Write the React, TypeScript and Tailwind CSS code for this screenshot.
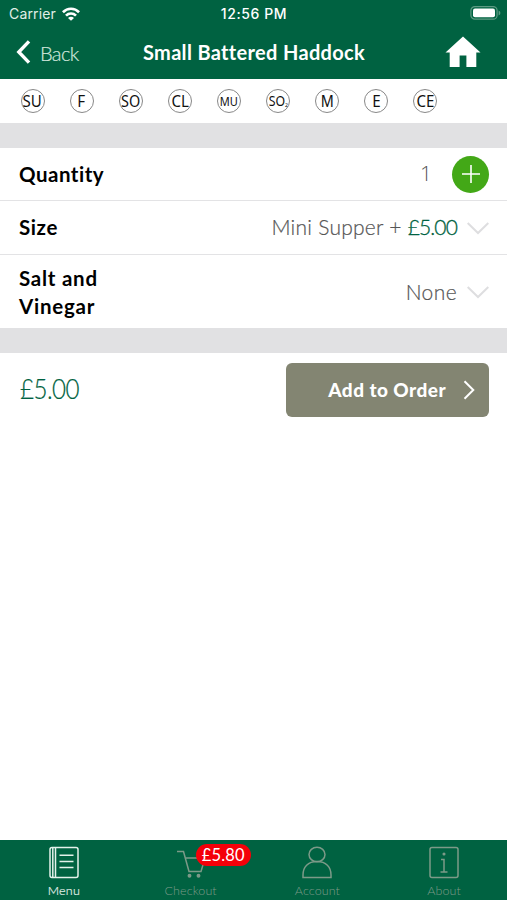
import React from 'react';

interface Allergen {
  code: string;
  sub?: string;
  className: string;
}

const allergens: Allergen[] = [
  { code: 'SU', className: 'text-[16px] scale-x-[0.94]' },
  { code: 'F', className: 'text-[16px] scale-x-[0.95]' },
  { code: 'SO', className: 'text-[16px] scale-x-[0.9]' },
  { code: 'CL', className: 'text-[16px] scale-x-[0.94]' },
  { code: 'MU', className: 'pt-[1px] text-[12px] scale-x-[0.92]' },
  { code: 'SO', sub: '2', className: 'text-[14.5px] scale-x-[0.85] pb-[1px]' },
  { code: 'M', className: 'text-[16px] scale-x-[0.9]' },
  { code: 'E', className: 'text-[16px] scale-x-[0.95]' },
  { code: 'CE', className: 'text-[16px] scale-x-[0.94]' },
];

const StatusBar: React.FC = () => (
  <div className="grid h-[27px] grid-cols-3 items-center pl-[9px] pr-[6px] font-['Inter',sans-serif] text-white">
    <div className="flex items-center gap-[6px]">
      <span className="text-[14px] tracking-[0.15px] text-[#e0efe7]">Carrier</span>
      <svg width="18" height="14" viewBox="0 0 18 14" fill="none" stroke="white" strokeWidth="2.7">
        <path d="M0.9 5.2C5.4 0.6 12.6 0.6 17.1 5.2" />
        <path d="M4 8.6C6.8 5.8 11.2 5.8 14 8.6" />
        <path d="M9 13.8L6 10.9C7.8 9.4 10.2 9.4 12 10.9Z" fill="white" stroke="none" />
      </svg>
    </div>
    <span className="-ml-[2px] whitespace-nowrap text-center text-[14px] font-medium tracking-[0.6px]">12:56 PM</span>
    <svg className="-mt-[1px] justify-self-end" width="31" height="14" viewBox="0 0 31 14">
      <rect x="0.9" y="0.6" width="26.2" height="12.6" rx="4" fill="none" stroke="#5d9b83" strokeWidth="1.2" />
      <rect x="3" y="2.6" width="22" height="8.6" rx="2" fill="white" />
      <path d="M28.6 4.6Q30.4 5.4 30.4 7T28.6 9.4Z" fill="#5d9b83" />
    </svg>
  </div>
);

const NavBar: React.FC = () => (
  <div className="grid h-[52px] grid-cols-[100px_1fr_90px] items-center pb-[2px] pl-[16px] pr-[26px] text-white">
    <div className="flex items-center gap-[9px]">
      <svg width="15" height="24" viewBox="0 0 15 24" fill="none" stroke="white" strokeWidth="3.4">
        <path d="M13 1.3L2.8 12L13 22.7" />
      </svg>
      <span className="pt-[1px] text-[20px] font-light tracking-[-0.6px] text-[#d0e6dc] [-webkit-text-stroke:0.2px_#d0e6dc]">Back</span>
    </div>
    <h1 className="whitespace-nowrap pl-[1px] text-center text-[20px] font-bold tracking-[0.33px]">Small Battered Haddock</h1>
    <svg className="-mt-[1px] justify-self-end" width="36" height="32" viewBox="0 0 36 32" fill="white">
      <path d="M18 0.5L35.5 16.5H31.3V31H21.4V19.5H14.6V31H4.7V16.5H0.5Z" />
    </svg>
  </div>
);

const ChevronDown: React.FC = () => (
  <svg className="mt-[2px]" width="22" height="13" viewBox="0 0 22 13" fill="none" stroke="#dedee0" strokeWidth="2">
    <path d="M0.7 1L11 11L21.3 1" />
  </svg>
);

interface TabProps {
  label: string;
  active?: boolean;
  badge?: string;
  labelClass: string;
  children: React.ReactNode;
}

const Tab: React.FC<TabProps> = ({ label, active, badge, labelClass, children }) => (
  <div className={`relative flex flex-1 flex-col items-center pl-[1px] pt-[6px] ${active ? 'text-[#e3f1ea]' : 'text-[#7c9a88]'}`}>
    <svg width="32" height="34" viewBox="0 0 32 34" fill="none" stroke="currentColor" strokeWidth="1.5">
      {children}
    </svg>
    <span className={`mt-[4px] text-[12.5px] font-light leading-[14px] ${labelClass}`}>{label}</span>
    {badge && (
      <span className="absolute left-[69px] top-[4px] flex h-[22px] w-[55px] items-center justify-center rounded-full bg-[#f40009] text-[16.5px] tracking-[0.2px] text-white">
        {badge}
      </span>
    )}
  </div>
);

const App: React.FC = () => (
  <div className="flex h-[900px] w-[507px] flex-col overflow-hidden bg-white font-['Lato',sans-serif]">
    <header className="h-[79px] shrink-0 bg-[#006241]">
      <StatusBar />
      <NavBar />
    </header>

    <div className="flex h-[44px] shrink-0 items-center gap-[25.1px] pl-[20.5px]">
      {allergens.map((item, index) => (
        <span
          key={index}
          className="flex size-[24px] items-center justify-center rounded-full border border-[#888] font-['Noto_Sans','Open_Sans',sans-serif] leading-none text-[#111]"
        >
          <span className={`inline-flex items-end ${item.className}`}>
            {item.code}
            {item.sub && <span className="text-[6px] leading-[5px]">{item.sub}</span>}
          </span>
        </span>
      ))}
    </div>

    <div className="h-[25px] shrink-0 bg-[#e1e1e3]" />

    <div className="flex h-[53px] shrink-0 items-center border-b border-[#e3e3e5] pl-[19px] pr-[18px]">
      <span className="text-[20.5px] font-bold tracking-[0.5px] text-black">Quantity</span>
      <span className="ml-auto mr-[20px] font-['Open_Sans',sans-serif] text-[21px] font-light text-[#555]">1</span>
      <button className="flex size-[37px] items-center justify-center rounded-full bg-[#43a817]">
        <svg width="18" height="18" viewBox="0 0 18 18" stroke="white" strokeWidth="1.6">
          <path d="M9 0V18M0 9H18" />
        </svg>
      </button>
    </div>

    <div className="flex h-[54px] shrink-0 items-center border-b border-[#e3e3e5] pb-[1px] pl-[19px] pr-[18px]">
      <span className="text-[20.5px] font-bold tracking-[0.6px] text-black">Size</span>
      <span className="ml-auto mr-[10px] text-[21px] font-light tracking-[0.25px] text-[#555] [-webkit-text-stroke:0.2px_#555]">
        Mini Supper + <span className="tracking-[-0.85px] text-[#006241] [-webkit-text-stroke:0.3px_#006241]">£5.00</span>
      </span>
      <ChevronDown />
    </div>

    <div className="flex h-[73px] shrink-0 items-center pl-[19px] pr-[18px]">
      <span className="w-[110px] text-[20.5px] font-bold leading-[28px] tracking-[0.75px] text-black">Salt and Vinegar</span>
      <span className="ml-auto mr-[10px] text-[21px] font-light tracking-[0.4px] text-[#555] [-webkit-text-stroke:0.2px_#555]">None</span>
      <ChevronDown />
    </div>

    <div className="h-[25px] shrink-0 bg-[#e1e1e3]" />

    <div className="flex h-[74px] shrink-0 items-center justify-between pl-[20px] pr-[18px]">
      <span className="origin-left scale-x-[0.91] text-[26.5px] font-light tracking-[-0.6px] text-[#006241] [-webkit-text-stroke:0.2px_#006241]">£5.00</span>
      <button className="flex h-[54px] w-[203px] items-center justify-end rounded-[6px] bg-[#838572] pr-[14px] text-white">
        <span className="mr-[17px] text-[19px] font-black tracking-[0.45px]">Add to Order</span>
        <svg width="12" height="20" viewBox="0 0 12 20" fill="none" stroke="white" strokeWidth="2">
          <path d="M1.5 1.2L10.3 10L1.5 18.8" />
        </svg>
      </button>
    </div>

    <nav className="mt-auto flex h-[60px] shrink-0 bg-[#006241]">
      <Tab label="Menu" active labelClass="tracking-[0.2px] [-webkit-text-stroke:0.2px_#e3f1ea]">
        <rect x="2" y="1.5" width="28" height="30" rx="2" />
        <path d="M4.8 1.5V31.5M7.5 1.5V31.5M11.5 9.3H25.5M11.5 15.5H25.5M11.5 21.5H25.5" />
      </Tab>
      <Tab label="Checkout" badge="£5.80" labelClass="tracking-[0.1px]">
        <path d="M2 5.5H8.5L14 25.5H26L30 12H10.5" />
        <circle cx="14.5" cy="29.7" r="1.2" fill="currentColor" />
        <circle cx="23.5" cy="29.7" r="1.2" fill="currentColor" />
      </Tab>
      <Tab label="Account" labelClass="tracking-[0.1px]">
        <ellipse cx="16" cy="8.5" rx="8" ry="7.3" />
        <path d="M2 31.5V29C2 21 7 15.6 16 15.6S30 21 30 29V31.5Z" />
      </Tab>
      <Tab label="About" labelClass="tracking-[0.1px]">
        <rect x="2" y="1.5" width="28" height="30" rx="2" />
        <path d="M13 13.5H16V26M12.5 26H19.5" />
        <circle cx="16" cy="8" r="0.8" fill="currentColor" />
      </Tab>
    </nav>
  </div>
);

export default App;
